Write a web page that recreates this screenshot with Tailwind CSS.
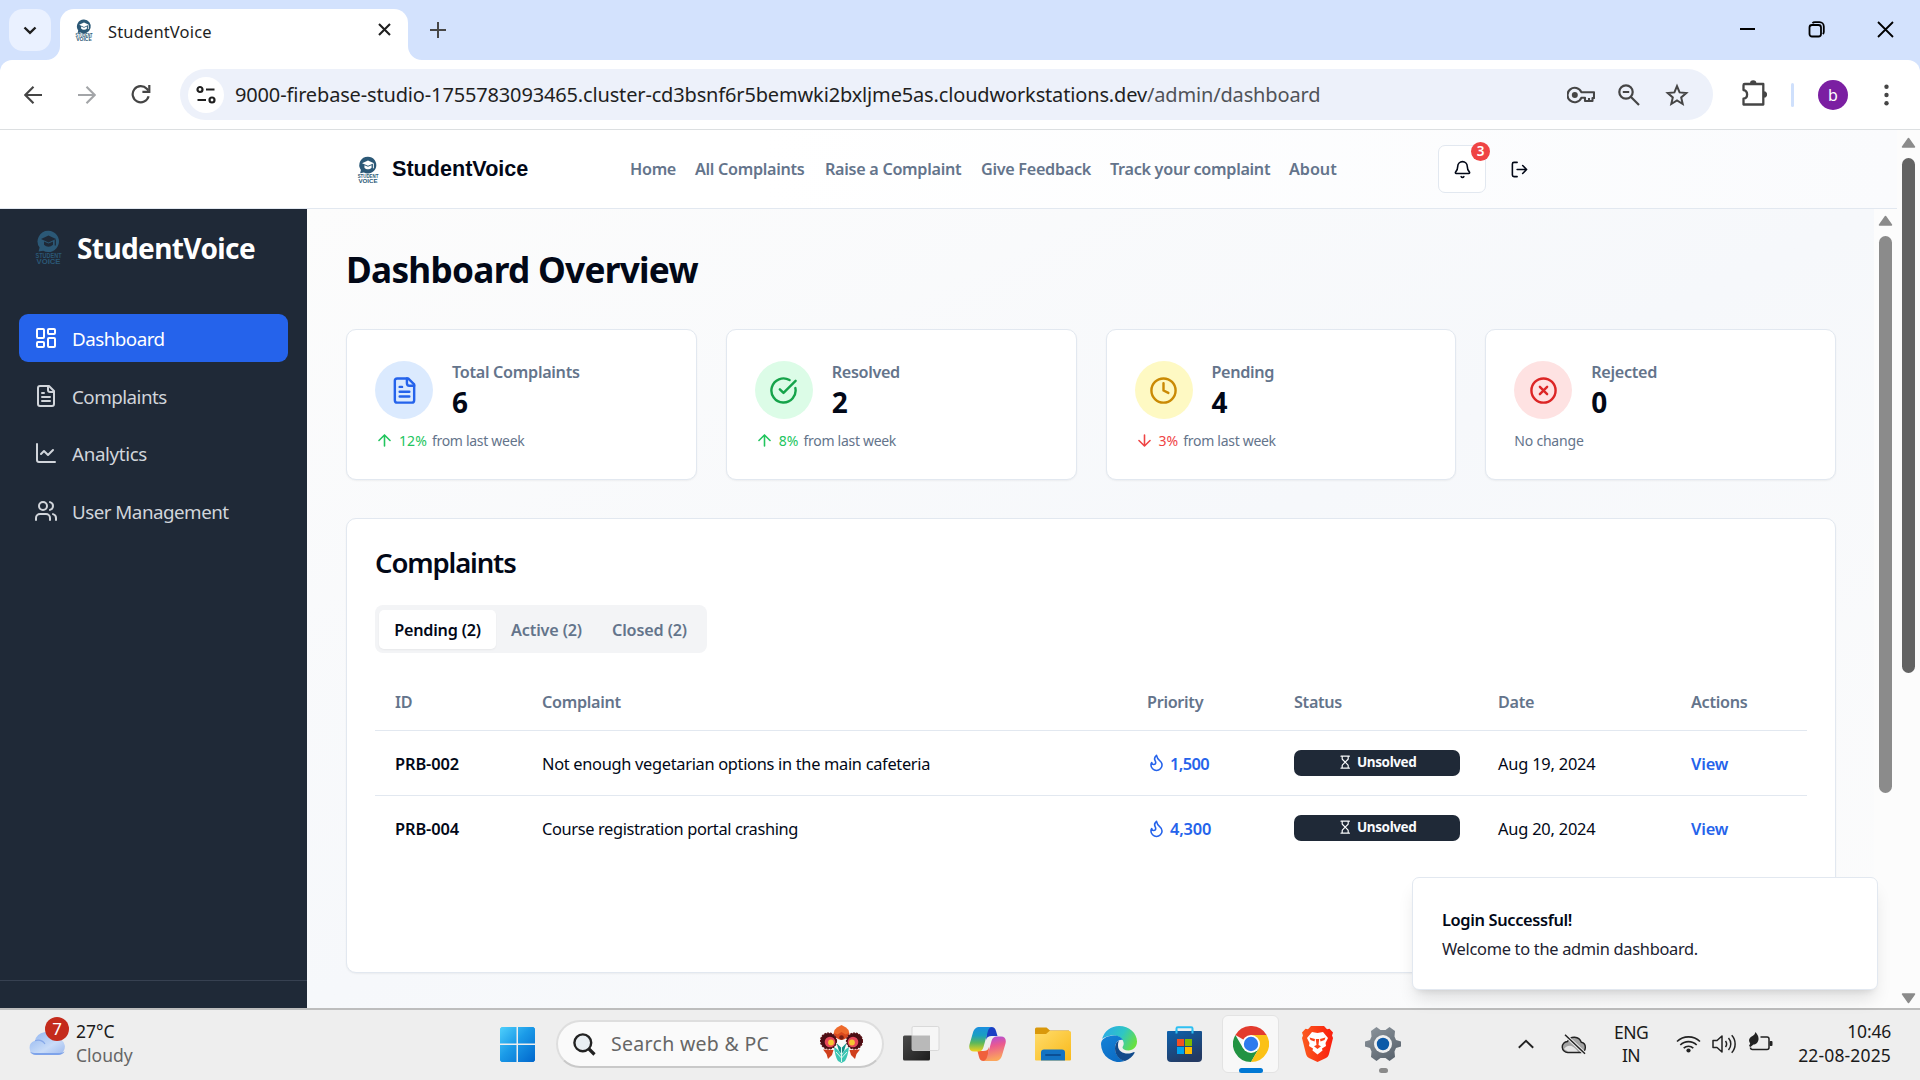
<!DOCTYPE html>
<html lang="en">
<head>
<meta charset="utf-8">
<title>StudentVoice</title>
<script src="https://cdn.jsdelivr.net/npm/@tailwindcss/browser@4"></script>
</head>
<body class="w-[1920px] h-[1080px] overflow-hidden flex flex-col bg-white text-[#020817] font-['Noto_Sans','Open_Sans',sans-serif] whitespace-nowrap">

<!-- Shared icon symbols -->
<svg class="hidden">
  <symbol id="logo" viewBox="0 0 27 34">
    <path d="M13.5 0.8a10.6 10.6 0 1 1-5.2 19.9L3.6 21.6l1-4A10.6 10.6 0 0 1 13.5.8z" fill="#2b5876"/>
    <path d="M13.5 5.6 6 9l7.500 3.400L21 9z" fill="var(--cap)"/>
    <path d="M9 11.500v3.200c2.500 2.600 6.500 2.600 9 0v-3.200l-4.500 2z" fill="var(--cap)"/>
    <path d="M20.300 9.500v6" stroke="var(--cap)" stroke-width="1.200"/>
    <text x="13.500" y="27.600" font-size="7" font-weight="700" text-anchor="middle" textLength="26" lengthAdjust="spacingAndGlyphs" fill="#2b5876" font-family="Liberation Sans">STUDENT</text>
    <text x="13.500" y="33.800" font-size="7.500" font-weight="700" text-anchor="middle" textLength="24" lengthAdjust="spacingAndGlyphs" fill="#2b5876" font-family="Liberation Sans">VOICE</text>
  </symbol>
  <symbol id="file" viewBox="0 0 24 24"><path d="M15 2H6a2 2 0 0 0-2 2v16a2 2 0 0 0 2 2h12a2 2 0 0 0 2-2V7Z"/><path d="M14 2v4a2 2 0 0 0 2 2h4M10 9H8M16 13H8M16 17H8"/></symbol>
  <symbol id="up" viewBox="0 0 24 24"><path d="m5 12 7-7 7 7M12 19V5"/></symbol>
  <symbol id="flame" viewBox="0 0 24 24"><path d="M8.5 14.5A2.5 2.5 0 0 0 11 12c0-1.380-.5-2-1-3-1.072-2.143-.224-4.054 2-6 .5 2.500 2 4.900 4 6.500 2 1.600 3 3.500 3 5.500a7 7 0 1 1-14 0c0-1.153.433-2.294 1-3a2.500 2.500 0 0 0 2.500 2.500z"/></symbol>
  <symbol id="hourglass" viewBox="0 0 24 24"><path d="M5 22h14M5 2h14M17 22v-4.172a2 2 0 0 0-.586-1.414L12 12l-4.414 4.414A2 2 0 0 0 7 17.828V22M7 2v4.172a2 2 0 0 0 .586 1.414L12 12l4.414-4.414A2 2 0 0 0 17 6.172V2"/></symbol>
</svg>

<!-- Tab strip -->
<div class="h-[60px] shrink-0 bg-[#d3e2fd] flex items-start pl-[9px]">
  <div class="mt-[9px] size-[42px] rounded-[14px] bg-[#eaf1ff] flex items-center justify-center">
    <svg class="size-[14px]" viewBox="0 0 14 14" fill="none" stroke="#1f1f1f" stroke-width="2.4"><path d="M1.500 4.500 7 9.800l5.500-5.300"/></svg>
  </div>
  <div class="relative ml-[9px] mt-[9px] w-[348px] h-[51px] rounded-t-[14px] bg-white flex items-center pl-[15px] pr-[17px]">
    <svg class="absolute -left-[14px] bottom-0 size-[14px]" viewBox="0 0 14 14"><path d="M14 0v14H0A14 14 0 0 0 14 0z" fill="#fff"/></svg>
    <svg class="absolute -right-[14px] bottom-0 size-[14px]" viewBox="0 0 14 14"><path d="M0 0v14h14A14 14 0 0 1 0 0z" fill="#fff"/></svg>
    <svg class="w-[18px] h-[22px] -mt-[9px] [--cap:#fff]"><use href="#logo"/></svg>
    <span class="ml-[15px] -mt-[5px] text-[16.500px] tracking-[0.150px] text-[#1f1f1f]">StudentVoice</span>
    <svg class="ml-auto -mt-[10px] size-[13px]" viewBox="0 0 13 13" stroke="#1f1f1f" stroke-width="2.100"><path d="m1 1 11 11M12 1 1 12"/></svg>
  </div>
  <svg class="ml-[22px] mt-[22px] size-[16px]" viewBox="0 0 16 16" stroke="#474747" stroke-width="2"><path d="M8 0v16M0 8h16"/></svg>
  <div class="ml-auto mt-[21px] mr-[26px] flex items-center gap-[52px]">
    <svg class="size-[17px]" viewBox="0 0 17 17" stroke="#000" stroke-width="2"><path d="M1 8h15"/></svg>
    <svg class="size-[17px]" viewBox="0 0 17 17" fill="none" stroke="#000" stroke-width="1.800"><rect x="1.500" y="4" width="11.500" height="11.500" rx="2.500"/><path d="M4.500 2.200C5 1.500 6 1.200 7 1.200h4.500a4.300 4.300 0 0 1 4.300 4.300V11c0 .8-.4 1.500-1 2"/></svg>
    <svg class="size-[17px]" viewBox="0 0 17 17" stroke="#000" stroke-width="1.800"><path d="m1 1 15 15M16 1 1 16"/></svg>
  </div>
</div>

<!-- Toolbar -->
<div class="h-[70px] shrink-0 bg-[#d3e2fd]">
<div class="h-full rounded-t-[12px] bg-white border-b border-[#dcdfe1] flex items-center pl-[24px]">
  <svg class="size-[18px]" viewBox="0 0 18 18" fill="none" stroke="#454545" stroke-width="2.100"><path d="M18 9H1.500M9.500 .8 1.300 9l8.200 8.200"/></svg>
  <svg class="ml-[36px] size-[18px]" viewBox="0 0 18 18" fill="none" stroke="#a3a5a8" stroke-width="2.100"><path d="M0 9h16.500M8.500 .8 16.700 9l-8.200 8.200"/></svg>
  <svg class="ml-[35px] w-[20px] h-[19px]" viewBox="0 0 20 19" fill="none" stroke="#454545" stroke-width="2.200"><path d="M17.600 11.300a8.100 8.100 0 1 1-1.800-7.500l1.500 1.600"/><path d="M18.300 0v6.900h-6.900"/></svg>
  <div class="ml-[29px] w-[1533px] h-[51px] rounded-full bg-[#edf1fa] flex items-center pl-[8px] pr-[24px]">
    <div class="size-[36px] rounded-full bg-white flex items-center justify-center">
      <svg class="size-[20px]" viewBox="0 0 20 20" fill="none" stroke="#1f1f1f" stroke-width="2.200"><circle cx="4" cy="4.500" r="2.500"/><path d="M10 4.500h8.500M1.500 15H10"/><circle cx="16" cy="15" r="2.500"/></svg>
    </div>
    <div class="ml-[11px] text-[20px] tracking-[-0.155px] text-[#1f1f1f]">9000-firebase-studio-1755783093465.cluster-cd3bsnf6r5bemwki2bxljme5as.cloudworkstations.dev<span class="text-[#505358]">/admin/dashboard</span></div>
    <div class="ml-auto flex items-center gap-[23px]">
      <svg class="w-[28px] h-[20px]" viewBox="0 0 28 20" fill="none" stroke="#454545" stroke-width="2.100"><path d="M14.300 7.200A7.200 7.200 0 1 0 14.300 12.800H18v3.200h7.500v-3H27V7.200z" stroke-linejoin="round"/><circle cx="7.800" cy="10" r="3" fill="#454545" stroke="none"/><path d="M22 16v-3"/></svg>
      <svg class="size-[22px]" viewBox="0 0 22 22" fill="none" stroke="#454545" stroke-width="2.200"><circle cx="8" cy="8" r="6.700"/><path d="m13 13 8 8M4.800 8h6.400"/></svg>
      <svg class="size-[24px] ml-[2px]" viewBox="0 0 24 24" fill="none" stroke="#454545" stroke-width="2"><path d="m12 3.200 2.600 6.200 6.700.6-5.100 4.400 1.500 6.600-5.700-3.500L6.300 21l1.500-6.600L2.700 10l6.700-.6z"/></svg>
    </div>
  </div>
  <svg class="ml-[28px] w-[26px] h-[28px] -mt-[4px]" viewBox="0 0 26 28" fill="none" stroke="#454545" stroke-width="2.300"><path d="M3.700 5h18.600v20.500H2.500v-5.800c2-.3 3.600-2 3.600-4.300s-1.600-4-3.600-4.300V6.200C2.500 5.500 3 5 3.700 5z" stroke-linejoin="round"/><path d="M9 4.500a3.200 3.200 0 0 1 6.400 0zM22.800 12.200a3.300 3.300 0 0 1 0 6.600z" fill="#454545" stroke="none"/></svg>
  <div class="ml-[24px] w-[3px] h-[24px] rounded bg-[#cfe0fc]"></div>
  <div class="ml-[24px] size-[30px] rounded-full bg-[#7b1fa2] text-white text-[16px] flex items-center justify-center">b</div>
  <svg class="ml-[36px] w-[5px] h-[22px]" viewBox="0 0 5 22" fill="#454545"><circle cx="2.500" cy="2.800" r="2.200"/><circle cx="2.500" cy="11" r="2.200"/><circle cx="2.500" cy="19.200" r="2.200"/></svg>
</div>
</div>

<!-- Page viewport -->
<div class="relative h-[878px] shrink-0 flex">
  <div class="w-[1897px] flex flex-col">
    <!-- Site header -->
    <header class="h-[79px] shrink-0 border-b border-[#e2e8f0] bg-gradient-to-r from-white from-40% to-[#fafbfd] flex items-center pl-[357px]">
      <svg class="w-[22px] h-[27px] [--cap:#fff]"><use href="#logo"/></svg>
      <span class="ml-[13px] pt-[1px] w-[238px] font-['Liberation_Sans',sans-serif] font-bold text-[21.600px]">StudentVoice</span>
      <nav class="flex gap-[19px] pt-[1px] text-[16.200px] font-semibold text-[#64748b] tracking-[-0.300px]">
        <a class="w-[46px]">Home</a><a class="w-[111px]">All Complaints</a><a class="w-[137px]">Raise a Complaint</a><a class="w-[110px]">Give Feedback</a><a class="w-[160px]">Track your complaint</a><a class="w-[48px] tracking-[-0.050px]">About</a>
      </nav>
      <button class="relative ml-[101px] size-[48px] rounded-[7px] border border-[#e2e8f0] bg-white flex items-center justify-center">
        <svg class="size-[19px]" viewBox="0 0 24 24" fill="none" stroke="currentColor" stroke-width="2" stroke-linecap="round" stroke-linejoin="round"><path d="M10.268 21a2 2 0 0 0 3.464 0M3.262 15.326A1 1 0 0 0 4 17h16a1 1 0 0 0 .74-1.673C19.410 13.956 18 12.499 18 8A6 6 0 0 0 6 8c0 4.499-1.411 5.956-2.738 7.326"/></svg>
        <span class="absolute -top-[4px] -right-[5px] size-[19px] rounded-full bg-[#ef4444] text-white text-[13.500px] font-semibold flex items-center justify-center">3</span>
      </button>
      <svg class="ml-[24px] size-[19px]" viewBox="0 0 24 24" fill="none" stroke="currentColor" stroke-width="2" stroke-linecap="round" stroke-linejoin="round"><path d="m16 17 5-5-5-5M21 12H9M9 21H5a2 2 0 0 1-2-2V5a2 2 0 0 1 2-2h4"/></svg>
    </header>

    <div class="h-[799px] flex">
      <!-- Sidebar -->
      <aside class="w-[307px] bg-[#1f2937] flex flex-col">
        <div class="h-[80px] flex items-center pl-[35px]">
          <svg class="w-[27px] h-[34px] mt-[-5px] [--cap:#1f2937]"><use href="#logo"/></svg>
          <span class="ml-[15px] -mt-[2px] text-white font-bold text-[28px] tracking-[-0.600px]">StudentVoice</span>
        </div>
        <nav class="mt-[25px] px-[19px] flex flex-col gap-[9.700px] text-[18.800px] tracking-[-0.520px] text-[#d1d5db]">
          <a class="h-[48px] rounded-[9px] bg-[#2563eb] text-white flex items-center pl-[15px] gap-[14px]">
            <svg class="size-[24px]" viewBox="0 0 24 24" fill="none" stroke="currentColor" stroke-width="2" stroke-linejoin="round"><rect x="3" y="3" width="7" height="9" rx="1"/><rect x="14" y="3" width="7" height="5" rx="1"/><rect x="14" y="12" width="7" height="9" rx="1"/><rect x="3" y="16" width="7" height="5" rx="1"/></svg><span class="pt-[2px]">Dashboard</span></a>
          <a class="h-[48px] flex items-center pl-[15px] gap-[14px]">
            <svg class="size-[24px]" fill="none" stroke="currentColor" stroke-width="2" stroke-linecap="round" stroke-linejoin="round"><use href="#file"/></svg><span class="pt-[2px]">Complaints</span></a>
          <a class="h-[48px] flex items-center pl-[15px] gap-[14px] tracking-[-0.360px]">
            <svg class="size-[24px]" viewBox="0 0 24 24" fill="none" stroke="currentColor" stroke-width="2" stroke-linecap="round" stroke-linejoin="round"><path d="M3 3v16a2 2 0 0 0 2 2h16M19 9l-5 5-4-4-3 3"/></svg><span class="pt-[2px]">Analytics</span></a>
          <a class="h-[48px] flex items-center pl-[15px] gap-[14px]">
            <svg class="size-[24px]" viewBox="0 0 24 24" fill="none" stroke="currentColor" stroke-width="2" stroke-linecap="round" stroke-linejoin="round"><path d="M16 21v-2a4 4 0 0 0-4-4H6a4 4 0 0 0-4 4v2M22 21v-2a4 4 0 0 0-3-3.870M16 3.130a4 4 0 0 1 0 7.750"/><circle cx="9" cy="7" r="4"/></svg><span class="pt-[2px]">User Management</span></a>
        </nav>
        <div class="mt-auto h-[28px] border-t border-[#374151]"></div>
      </aside>

      <!-- Main content -->
      <main class="w-[1567px] pl-[39px] pr-[38px] pt-[38px] bg-linear-to-br from-[#fcfcfc] via-[#f6f8fb] to-[#fcfcfc]">
        <h1 class="h-[44px] flex items-center text-[35.200px] font-bold tracking-[-0.720px]">Dashboard Overview</h1>

        <section class="mt-[38px] grid grid-cols-4 gap-[29px]">
          <div class="h-[151px] rounded-[10px] border border-[#e2e8f0] bg-white shadow-xs px-[28px] pt-[29px]">
            <div class="flex items-center">
              <div class="size-[58px] rounded-full bg-[#dbeafe] flex items-center justify-center text-[#2563eb]"><svg class="size-[29px]" fill="none" stroke="currentColor" stroke-width="2" stroke-linecap="round" stroke-linejoin="round"><use href="#file"/></svg></div>
              <div class="ml-[19px]"><p class="h-[24px] leading-[26px] text-[16.200px] font-semibold text-[#64748b] tracking-[-0.300px]">Total Complaints</p><p class="h-[38px] leading-[39px] text-[28px] font-bold">6</p></div>
            </div>
            <p class="mt-[9px] flex items-center text-[14px] text-[#64748b] tracking-[-0.300px]"><svg class="size-[19px] mr-[5px] text-[#22c55e]" fill="none" stroke="currentColor" stroke-width="2" stroke-linecap="round" stroke-linejoin="round"><use href="#up"/></svg><span class="text-[#22c55e] mr-[5px] tracking-[0.100px]">12%</span>from last week</p>
          </div>
          <div class="h-[151px] rounded-[10px] border border-[#e2e8f0] bg-white shadow-xs px-[28px] pt-[29px]">
            <div class="flex items-center">
              <div class="size-[58px] rounded-full bg-[#dcfce7] flex items-center justify-center text-[#16a34a]"><svg class="size-[29px]" viewBox="0 0 24 24" fill="none" stroke="currentColor" stroke-width="2" stroke-linecap="round" stroke-linejoin="round"><path d="M21.801 10A10 10 0 1 1 17 3.335M9 11l3 3L22 4"/></svg></div>
              <div class="ml-[19px]"><p class="h-[24px] leading-[26px] text-[16.200px] font-semibold text-[#64748b] tracking-[-0.350px]">Resolved</p><p class="h-[38px] leading-[39px] text-[28px] font-bold">2</p></div>
            </div>
            <p class="mt-[9px] flex items-center text-[14px] text-[#64748b] tracking-[-0.300px]"><svg class="size-[19px] mr-[5px] text-[#22c55e]" fill="none" stroke="currentColor" stroke-width="2" stroke-linecap="round" stroke-linejoin="round"><use href="#up"/></svg><span class="text-[#22c55e] mr-[5px] tracking-[0.100px]">8%</span>from last week</p>
          </div>
          <div class="h-[151px] rounded-[10px] border border-[#e2e8f0] bg-white shadow-xs px-[28px] pt-[29px]">
            <div class="flex items-center">
              <div class="size-[58px] rounded-full bg-[#fef9c3] flex items-center justify-center text-[#ca8a04]"><svg class="size-[29px]" viewBox="0 0 24 24" fill="none" stroke="currentColor" stroke-width="2" stroke-linecap="round" stroke-linejoin="round"><circle cx="12" cy="12" r="10"/><path d="M12 6v6l4 2"/></svg></div>
              <div class="ml-[19px]"><p class="h-[24px] leading-[26px] text-[16.200px] font-semibold text-[#64748b] tracking-[-0.350px]">Pending</p><p class="h-[38px] leading-[39px] text-[28px] font-bold">4</p></div>
            </div>
            <p class="mt-[9px] flex items-center text-[14px] text-[#64748b] tracking-[-0.300px]"><svg class="size-[19px] mr-[5px] text-[#ef4444] rotate-180" fill="none" stroke="currentColor" stroke-width="2" stroke-linecap="round" stroke-linejoin="round"><use href="#up"/></svg><span class="text-[#ef4444] mr-[5px] tracking-[0.100px]">3%</span>from last week</p>
          </div>
          <div class="h-[151px] rounded-[10px] border border-[#e2e8f0] bg-white shadow-xs px-[28px] pt-[29px]">
            <div class="flex items-center">
              <div class="size-[58px] rounded-full bg-[#fee2e2] flex items-center justify-center text-[#dc2626]"><svg class="size-[29px]" viewBox="0 0 24 24" fill="none" stroke="currentColor" stroke-width="2" stroke-linecap="round" stroke-linejoin="round"><circle cx="12" cy="12" r="10"/><path d="m15 9-6 6M9 9l6 6"/></svg></div>
              <div class="ml-[19px]"><p class="h-[24px] leading-[26px] text-[16.200px] font-semibold text-[#64748b] tracking-[-0.300px]">Rejected</p><p class="h-[38px] leading-[39px] text-[28px] font-bold">0</p></div>
            </div>
            <p class="mt-[9px] flex items-center text-[14px] text-[#64748b] tracking-[-0.200px]">No change</p>
          </div>
        </section>

        <section class="mt-[38px] h-[455px] rounded-[10px] border border-[#e2e8f0] bg-white shadow-xs px-[28px] pt-[27px]">
          <h2 class="h-[34px] flex items-center text-[27.500px] font-semibold tracking-[-1.150px]">Complaints</h2>
          <div class="mt-[25px] w-[332px] h-[48px] rounded-[8px] bg-[#f3f4f6] flex items-center pl-[4px] text-[16.200px] font-semibold text-[#64748b] tracking-[-0.150px]">
            <span class="w-[117px] h-[39px] rounded-[5px] bg-white shadow-xs text-[#020817] flex items-center justify-center pt-[2px] tracking-[-0.200px]">Pending (2)</span>
            <span class="ml-[15px] w-[72px] pt-[2px]">Active (2)</span>
            <span class="ml-[29px] pt-[2px]">Closed (2)</span>
          </div>
          <div class="mt-[20px] text-[16.400px]">
            <div class="h-[58px] pt-[2px] border-b border-[#e2e8f0] grid grid-cols-[147px_605px_147px_204px_193px_1fr] items-center text-[#64748b] text-[16.200px] font-semibold tracking-[-0.300px] *:pl-[20px]">
              <span>ID</span><span>Complaint</span><span>Priority</span><span>Status</span><span>Date</span><span>Actions</span>
            </div>
            <div class="h-[65px] pt-[2px] border-b border-[#e2e8f0] grid grid-cols-[147px_605px_147px_204px_193px_1fr] items-center *:pl-[20px]">
              <span class="font-semibold tracking-[-0.100px]">PRB-002</span><span class="tracking-[-0.310px]">Not enough vegetarian options in the main cafeteria</span>
              <span class="flex items-center gap-[4px] text-[#2563eb] font-semibold tracking-[-0.600px]"><svg class="size-[19px] -mt-[2px]" fill="none" stroke="currentColor" stroke-width="2" stroke-linecap="round" stroke-linejoin="round"><use href="#flame"/></svg>1,500</span>
              <span class="pr-[18px] -mt-[3px]"><span class="h-[26px] rounded-[7px] bg-[#1f2937] text-[#f8fafc] flex items-center justify-center gap-[5px] text-[13.500px] font-bold tracking-[-0.400px]"><svg class="size-[14.400px]" fill="none" stroke="currentColor" stroke-width="2" stroke-linecap="round" stroke-linejoin="round"><use href="#hourglass"/></svg>Unsolved</span></span>
              <span class="tracking-[-0.200px]">Aug 19, 2024</span><a class="text-[#2563eb] font-semibold tracking-[-0.150px]">View</a>
            </div>
            <div class="h-[65px] pt-[2px] grid grid-cols-[147px_605px_147px_204px_193px_1fr] items-center *:pl-[20px]">
              <span class="font-semibold tracking-[-0.100px]">PRB-004</span><span class="tracking-[-0.360px]">Course registration portal crashing</span>
              <span class="flex items-center gap-[4px] text-[#2563eb] font-semibold tracking-[-0.200px]"><svg class="size-[19px] -mt-[2px]" fill="none" stroke="currentColor" stroke-width="2" stroke-linecap="round" stroke-linejoin="round"><use href="#flame"/></svg>4,300</span>
              <span class="pr-[18px] -mt-[4px]"><span class="h-[26px] rounded-[7px] bg-[#1f2937] text-[#f8fafc] flex items-center justify-center gap-[5px] text-[13.500px] font-bold tracking-[-0.400px]"><svg class="size-[14.400px]" fill="none" stroke="currentColor" stroke-width="2" stroke-linecap="round" stroke-linejoin="round"><use href="#hourglass"/></svg>Unsolved</span></span>
              <span class="tracking-[-0.200px]">Aug 20, 2024</span><a class="text-[#2563eb] font-semibold tracking-[-0.150px]">View</a>
            </div>
          </div>
        </section>
      </main>

      <!-- Inner scrollbar -->
      <div class="w-[23px] bg-[#fcfcfc] flex flex-col items-center pt-[6px]">
        <svg class="w-[15px] h-[11px]" viewBox="0 0 15 11"><path d="M7.500 1.500 13.500 10h-12z" fill="#8b8b8b" stroke="#8b8b8b" stroke-width="1.500" stroke-linejoin="round"/></svg>
        <div class="mt-[10px] w-[13px] h-[557px] rounded-full bg-[#8b8b8b]"></div>
      </div>
    </div>
  </div>

  <!-- Outer scrollbar -->
  <div class="w-[23px] bg-[#fcfcfc] flex flex-col items-center pt-[7px] pb-[4px]">
    <svg class="w-[15px] h-[11px]" viewBox="0 0 15 11"><path d="M7.500 1.500 13.500 10h-12z" fill="#8b8b8b" stroke="#8b8b8b" stroke-width="1.500" stroke-linejoin="round"/></svg>
    <div class="mt-[10px] w-[13px] h-[515px] rounded-full bg-[#636363]"></div>
    <svg class="mt-auto w-[15px] h-[11px] rotate-180" viewBox="0 0 15 11"><path d="M7.500 1.500 13.500 10h-12z" fill="#8b8b8b" stroke="#8b8b8b" stroke-width="1.500" stroke-linejoin="round"/></svg>
  </div>

  <!-- Toast -->
  <div class="absolute left-[1412px] top-[747px] w-[466px] h-[113px] rounded-[7px] border border-[#e2e8f0] bg-white shadow-[0_12px_18px_-4px_rgba(0,0,0,0.12),0_5px_7px_-5px_rgba(0,0,0,0.12)] pl-[29px] pt-[30px] text-[16.400px]">
    <p class="h-[24px] leading-[24px] font-semibold tracking-[-0.360px]">Login Successful!</p>
    <p class="mt-[5px] h-[24px] leading-[24px] text-[#1c2230] tracking-[-0.300px]">Welcome to the admin dashboard.</p>
  </div>
</div>

<!-- Taskbar -->
<div class="h-[72px] shrink-0 border-t-2 border-[#bdbdbd] bg-[#eeeeee] flex items-center pl-[28px] pr-[29px] pb-[2px] text-[17.500px] text-[#1a1a1a]">
  <div class="relative w-[38px] h-[46px]">
    <svg class="absolute left-0 top-[8px] w-[38px] h-[28px]" viewBox="0 0 38 28"><defs><linearGradient id="cl" x2="1" y2="1"><stop stop-color="#8fb4f0"/><stop offset=".6" stop-color="#c9dcf8"/><stop offset="1" stop-color="#9db9ee"/></linearGradient></defs><path d="M8 26a7.300 7.300 0 0 1-1-14.300A10.500 10.500 0 0 1 27 9.500 8.300 8.300 0 0 1 30 26z" fill="url(#cl)"/><path d="M2 22.500c1 2 3 3.500 6 3.500h22c3 0 5.500-1.500 6.600-3.500-2 1.200-4 1.500-6.600 1.500H8c-2.600 0-4.500-.3-6-1.500z" fill="#7ea3ea"/><path d="M7 11.700c4-1.200 8 .3 10 3.300" fill="none" stroke="#87a8e8" stroke-width="1.200"/></svg>
    <span class="absolute left-[17px] -top-[4px] size-[24px] rounded-full bg-[#c42b1c] text-white text-[17px] flex items-center justify-center">7</span>
  </div>
  <div class="ml-[10px] w-[58px] leading-[24px] pb-[2px]"><p>27°C</p><p class="text-[#666]">Cloudy</p></div>
  <svg class="ml-[366px] size-[35px]" viewBox="0 0 35 35"><defs><linearGradient id="wn" x2="1" y2="1"><stop stop-color="#4fd0fc"/><stop offset=".45" stop-color="#1b9be8"/><stop offset="1" stop-color="#0066cc"/></linearGradient></defs><path d="M1.500 0H16.500v16.500H0V1.500zM18 0h15.500L35 1.500v15H18zM0 18h16.500v17H1.500L0 33.500zM18 18h17v15.500L33.500 35H18z" fill="url(#wn)"/></svg>
  <div class="ml-[21px] w-[328px] h-[48px] rounded-full bg-[#fafafa] border-2 border-[#dedede] border-b-[#c9c9c9] flex items-center pl-[15px] pr-[19px]">
    <svg class="size-[23px]" viewBox="0 0 23 23" fill="#e9eef2" stroke="#222" stroke-width="2.400"><path d="m16 16 5.500 5.500" stroke-width="3.200"/><circle cx="9.800" cy="9.800" r="8.400"/></svg>
    <span class="ml-[15px] text-[19.500px] tracking-[0.300px] text-[#666]">Search web &amp; PC</span>
    <svg class="ml-auto w-[43px] h-[38px]" viewBox="0 0 43 38">
      <path d="M21.500 14 13.500 9l1-4 2.500-2.500L21.500 0 26 2.500 28.500 5l1 4z" fill="#ee6a2c"/><path d="M21.500 15a8 7 0 0 1-7.500-7l3.500 1.500L21.500 7l4 2.500L29 8a8 7 0 0 1-7.500 7z" fill="#d9481d"/>
      <circle cx="21.500" cy="12.500" r="2.300" fill="#7a1f12"/>
      <circle cx="8.500" cy="16" r="8" fill="#4a0e14" stroke="#5c1216" stroke-width="1.200" stroke-dasharray="2 1"/><circle cx="10" cy="17" r="5.300" fill="#e8485a"/><circle cx="11" cy="17.500" r="2.900" fill="#f7c531"/>
      <circle cx="34.500" cy="16" r="8" fill="#4a0e14" stroke="#5c1216" stroke-width="1.200" stroke-dasharray="2 1"/><circle cx="33" cy="17" r="5.300" fill="#e8485a"/><circle cx="32" cy="17.500" r="2.900" fill="#f7c531"/>
      <path d="M3 24.500 13.500 25l-1.500 5-4 4-1.500-5zM40 24.500 29.500 25l1.500 5 4 4 1.500-5z" fill="#cf3f1c"/>
      <path d="M16.500 18 21.500 23l5-5-2.500 8-2.500 3-2.500-3z" fill="#158f88"/><path d="M14 22c4 2 6 5 7.500 9 1.500-4 3.500-7 7.500-9-1 7-2 11-4 14l-3.500 2-3.500-2c-2-3-3-7-4-14z" fill="#3cc6b4"/><path d="M21.500 22v15M16 27l5.500 6 5.500-6" stroke="#dff5ef" stroke-width="1" fill="none"/>
    </svg>
  </div>
  <!-- Task view -->
  <svg class="ml-[18px] w-[38px] h-[36px]" viewBox="0 0 38 36"><defs><linearGradient id="tv" x2="1" y2="1"><stop stop-color="#4a4a4a"/><stop offset="1" stop-color="#1c1c1c"/></linearGradient></defs><rect x="1" y="9.500" width="27" height="25" rx="1.500" fill="url(#tv)"/><rect x="10" y="0.500" width="27" height="24" rx="1.500" fill="#f6f6f6" stroke="#d2d2d2" stroke-width=".8"/><path d="M10 9.500h18v15H11.500a1.500 1.500 0 0 1-1.500-1.500z" fill="#b9b9b9"/></svg>
  <!-- Copilot -->
  <svg class="ml-[29px] w-[37px] h-[34px]" viewBox="0 0 37 34"><defs><linearGradient id="c1" x2="0" y2="1"><stop stop-color="#1b8fe0"/><stop offset=".35" stop-color="#1a9fc0"/><stop offset=".65" stop-color="#5cb85a"/><stop offset="1" stop-color="#f2d21c"/></linearGradient><linearGradient id="c2" x2=".2" y2="1"><stop stop-color="#a24be8"/><stop offset=".45" stop-color="#ea5a90"/><stop offset="1" stop-color="#fba55c"/></linearGradient></defs>
    <path d="M18 0h4.500c2.500 0 3.800 1.500 4.500 4l1.500 5h-6c-3 0-4.500 1-5.500 4z" fill="#1a3fc4"/><path d="M19 34h-4.500c-2.500 0-3.800-1.500-4.500-4l-1.500-6h6c3 0 4.500-1 5.500-4z" fill="#f0603c"/>
    <path d="M11 0h12c-2.500.5-3.500 2-4.200 4.500L14.500 20c-.9 3-2.300 4.500-5.500 4.500H5c-4 0-5.500-3-4.500-7L4 5.500C5 2 7 0 11 0z" fill="url(#c1)"/><path d="M26 34H14c2.500-.5 3.500-2 4.200-4.500L22.500 14c.9-3 2.300-4.500 5.500-4.500h4c4 0 5.500 3 4.500 7L33 28.500C32 32 30 34 26 34z" fill="url(#c2)"/></svg>
  <!-- Explorer -->
  <svg class="ml-[29px] w-[36px] h-[34px]" viewBox="0 0 36 34"><defs><linearGradient id="fo" x2="1" y2="1"><stop stop-color="#ffdc6b"/><stop offset="1" stop-color="#f9b91a"/></linearGradient></defs><path d="M0 2a1.500 1.500 0 0 1 1.500-1.500h10L15 3.500h19v6H0z" fill="#d9980b"/><path d="M0 7h11l3.500-3H34.500A1.500 1.500 0 0 1 36 5.500v27a1 1 0 0 1-1 1H1a1 1 0 0 1-1-1z" fill="url(#fo)"/><path d="M6 33.500v-8a3 3 0 0 1 3-3h18a3 3 0 0 1 3 3v8z" fill="#1373c2"/><path d="M11 28h14" stroke="#0b4f94" stroke-width="2" stroke-linecap="round"/></svg>
  <!-- Edge -->
  <svg class="ml-[30px] size-[36px]" viewBox="0 0 36 36"><defs><linearGradient id="e1" x1="0" y1=".2" x2="1" y2=".6"><stop stop-color="#2aa9e8"/><stop offset=".55" stop-color="#2fc6c4"/><stop offset="1" stop-color="#69e03f"/></linearGradient><linearGradient id="e2" x2=".6" y2="1"><stop stop-color="#1583d8"/><stop offset="1" stop-color="#0c6cc4"/></linearGradient></defs><path d="M1 13C3.500 5 10 0 18 0c10.500 0 18 7.500 18 15.500 0 5.500-4 9-8.500 9-4 0-6-1.500-6-3 0-1 1.200-1.500 1.200-4 0-3.500-3.700-8-10.200-8C6 9.500 2.500 12 1 13z" fill="url(#e1)"/><path d="M13 9.500c4.500 0 7.500 2 9 4.500-4-1-8 2.500-8 8 0 7 5.500 12.500 10.500 12.800A18 18 0 0 1 0 18C0 13 6 9.500 13 9.500z" fill="url(#e2)"/><path d="M18 14.500c-3 1.500-4 4.500-4 8C14 29 19 34.500 24 35c4.500-1.500 8-5 9.500-8 .3-.8-.3-1.200-1-.8-6 3-15.500 1-15.500-6.700 0-2 .3-3.500 1-5z" fill="#114a8b"/></svg>
  <!-- Store -->
  <svg class="ml-[30px] w-[35px] h-[36px]" viewBox="0 0 35 36"><defs><linearGradient id="st" x2=".5" y2="1"><stop stop-color="#0d62ae"/><stop offset="1" stop-color="#243a63"/></linearGradient></defs><path d="M9.500 7V2.500c0-.8.500-1.300 1.300-1.300h13.400c.8 0 1.300.5 1.300 1.300V7" fill="none" stroke="#2fc0f2" stroke-width="2"/><path d="M0 6a1 1 0 0 1 1-1h33a1 1 0 0 1 1 1v26a4 4 0 0 1-4 4H4a4 4 0 0 1-4-4z" fill="url(#st)"/><path d="M10 13h7v7h-7z" fill="#f25022"/><path d="M18 13h7v7h-7z" fill="#7fba00"/><path d="M10 21h7v7h-7z" fill="#00a4ef"/><path d="M18 21h7v7h-7z" fill="#ffb900"/><path d="M9.500 4.500v3M25.500 4.500v3" stroke="#2fc0f2" stroke-width="2"/></svg>
  <!-- Chrome -->
  <div class="ml-[20px] relative w-[57px] h-[58px] rounded-[6px] bg-[#f8f8f8] border border-[#e3e3e3] flex items-center justify-center">
    <svg class="size-[36px]" viewBox="0 0 36 36"><path d="M18 9 33.600 9A18 18 0 0 0 2.400 9z" fill="#e33b2e"/><path d="M2.400 9 10.200 22.500h15.600L18 36A18 18 0 0 1 2.400 9z" fill="#229342"/><path d="M2.400 9h31.200L18 18z" fill="#e33b2e"/><path d="M25.800 22.500 18 36a18 18 0 0 0 15.600-27H18z" fill="#fbc116"/><circle cx="18" cy="18" r="9" fill="#fff"/><circle cx="18" cy="18" r="7.200" fill="#2f7bee"/></svg>
    <span class="absolute -bottom-[1px] w-[24px] h-[5px] rounded-full bg-[#0078d4]"></span>
  </div>
  <!-- Brave -->
  <svg class="ml-[23px] w-[31px] h-[36px]" viewBox="0 0 31 36"><defs><linearGradient id="br" x2="1"><stop stop-color="#fb5a1e"/><stop offset="1" stop-color="#fa1e0e"/></linearGradient></defs><path d="M9 0h13l3 3.200 2.500-.4L31 6.500l-1 3 1 2.500-4 16c-.5 2-1.500 3-3 4L15.500 36 7 32c-1.500-1-2.500-2-3-4L0 12l1-2.500-1-3 3.500-3.700 2.500.4z" fill="url(#br)"/><path d="M10 6 15.500 7 21 6l5 6-2.500 5 .5 3-4 2.500 .5 2-5 4-5-4 .5-2-4-2.500 .5-3L5 12z" fill="#fff"/><path d="M7.500 11.500 13 13l-.5 2.500-4-1.500zM23.500 11.500 18 13l.5 2.500 4-1.500zM13.800 13h3.400l-.7 6 2.500 1.200-3.500 2.800-3.500-2.800 2.500-1.200z" fill="#fb4218"/></svg>
  <!-- Settings -->
  <div class="ml-[32px] relative h-[56px] w-[36px] flex items-center">
    <svg class="size-[36px]" viewBox="0 0 36 36"><defs><linearGradient id="ge" x2=".7" y2="1"><stop stop-color="#8f979e"/><stop offset="1" stop-color="#5a646e"/></linearGradient></defs><path d="M0 15.500 5 14l1.500-3.500L6 5l5.500-4L15.500 4h5L24.500 1 30 5l-.5 5.500L31 14l5 1.500v5L31 22l-1.500 3.500L30 31l-5.500 4-4-3h-5l-4 3L6 31l.5-5.500L5 22 0 20.500z" fill="url(#ge)"/><circle cx="18" cy="18" r="9" fill="#f0f0f0"/><circle cx="18" cy="18" r="6.200" fill="#0c5aa8"/></svg>
    <span class="absolute -bottom-[1px] left-[14px] w-[9px] h-[5px] rounded-full bg-[#8a8a8a]"></span>
  </div>
  <!-- Tray -->
  <svg class="ml-auto w-[16px] h-[10px]" viewBox="0 0 16 10" fill="none" stroke="#222" stroke-width="1.900"><path d="m.8 8.800 7.200-7 7.200 7"/></svg>
  <svg class="ml-[27px] w-[26px] h-[21px]" viewBox="0 0 26 21"><path d="M7 18.500a5.500 5.500 0 0 1-.5-11 7.500 7.500 0 0 1 13.800.8A5.200 5.200 0 0 1 20 18.500z" fill="#a3a3a3" stroke="#222" stroke-width="1.400"/><path d="M3 15c4-5 9-4 14 2.500H7z" fill="#e4e4e4"/><path d="m4 .8 20 19" stroke="#eee" stroke-width="3.500"/><path d="m4 .8 20 19" stroke="#222" stroke-width="1.500"/></svg>
  <div class="ml-[27px] w-[34px] text-center leading-[23px] tracking-[-0.500px]"><p>ENG</p><p>IN</p></div>
  <svg class="ml-[28px] w-[25px] h-[18px]" viewBox="0 0 25 18" fill="none" stroke="#222" stroke-width="1.600"><path d="M1 6.500a16.500 16.500 0 0 1 23 0M4.300 10a11.700 11.700 0 0 1 16.400 0M7.700 13.200a7 7 0 0 1 9.600 0"/><circle cx="12.500" cy="15.500" r="2.100" fill="#222" stroke="none"/></svg>
  <svg class="ml-[11px] w-[25px] h-[20px]" viewBox="0 0 25 20" fill="none" stroke="#222" stroke-width="1.500" stroke-linejoin="round"><path d="M1 6.500h4L10 2v16l-5-4.500H1z"/><path d="M13.500 7a5 5 0 0 1 0 6M16.500 4a9 9 0 0 1 0 12M19.700 1.200a13 13 0 0 1 0 17.600"/></svg>
  <svg class="ml-[11px] w-[25px] h-[20px] -mt-[4px]" viewBox="0 0 25 20"><path d="M12.500 5H19a2 2 0 0 1 2 2v8.500a2 2 0 0 1-2 2H4.500a2 2 0 0 1-2-2" fill="none" stroke="#222" stroke-width="1.500"/><rect x="21.500" y="9" width="3" height="5" rx="1" fill="#222"/><path d="M7.500 0c2 2.500 3.300 4.500 3 7.500-.3 3-2.800 5-5 5L2.500 15 1 14l1.200-2.500C-.5 7.500 2 5.500 4.500 4 6 3 7 2 7.500 0z" fill="#222"/></svg>
  <div class="ml-[24px] w-[94px] text-right leading-[24px] tracking-[0.150px] pb-[2px]"><p class="tracking-[-0.200px]">10:46</p><p>22-08-2025</p></div>
</div>
</body>
</html>
